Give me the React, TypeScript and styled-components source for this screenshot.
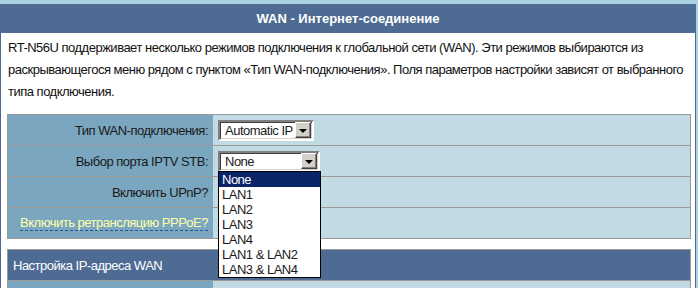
import styled, { createGlobalStyle } from 'styled-components'

const GlobalStyle = createGlobalStyle`
  html, body {
    margin: 0;
    padding: 0;
    background: #a8d2e2;
    overflow: hidden;
  }
  body {
    font-family: "Liberation Sans", Arial, sans-serif;
    font-size: 13px;
    letter-spacing: -0.5px;
    color: #000;
  }
`

const Panel = styled.div`
  margin-top: 4px;
  width: 694px;
  background: #fff;
  border-left: 1px solid #4c6a92;
  border-right: 1px solid #4c6a92;
  padding-bottom: 20px;
`

const PanelHeader = styled.div`
  height: 29px;
  margin: 0 -1px;
  background: #4d6b93;
  color: #fff;
  font-weight: bold;
  font-size: 13px;
  letter-spacing: 0;
  display: flex;
  align-items: center;
  justify-content: center;
`

const Intro = styled.p`
  margin: 4px 0 0;
  padding: 0 8px 0 7px;
  line-height: 22px;
  color: #111;
`

const Table = styled.div`
  margin: 11px 4px 0 6px;
  border: 1px solid #9a9a9a;
  & + & {
    margin-top: 10px;
  }
`

const Row = styled.div`
  display: grid;
  grid-template-columns: 205px 1fr;
  height: 30px;
  & + & {
    border-top: 1px solid #9a9a9a;
  }
`

const Label = styled.div`
  background: #7ba6c0;
  display: flex;
  align-items: center;
  justify-content: flex-end;
  padding-right: 5px;
  color: #1a1a1a;
  white-space: nowrap;
`

const HintLabel = styled.span<{ $hint?: boolean }>`
  color: ${({ $hint }) => ($hint ? '#ffffa8' : 'inherit')};
  border-bottom: ${({ $hint }) => ($hint ? '1px dashed #1f5a8c' : 'none')};
  line-height: 14px;
`

const Value = styled.div`
  background: #c1dae3;
  display: flex;
  align-items: center;
  padding-left: 5px;
  position: relative;
`

const SectionHeader = styled.div`
  height: 30px;
  background: #4d6b93;
  color: #fff;
  display: flex;
  align-items: center;
  padding-left: 5px;
  border-bottom: 1px solid #9a9a9a;
`

const Select = styled.div<{ $width: number }>`
  width: ${({ $width }) => $width}px;
  height: 21px;
  box-sizing: border-box;
  background: #fff;
  border: 2px solid;
  border-color: #808080 #fff #fff #808080;
  box-shadow: inset 1px 1px 0 #404040, inset -1px -1px 0 #d4d0c8;
  display: flex;
  align-items: center;
  padding: 0 1px 0 5px;
  color: #1a1a1a;
`

const SelectText = styled.span`
  flex: 1;
  white-space: nowrap;
  overflow: hidden;
`

const SelectButton = styled.span`
  width: 16px;
  height: 16px;
  flex-shrink: 0;
  box-sizing: border-box;
  background: #d4d0c8;
  border: 1px solid;
  border-color: #fff #404040 #404040 #fff;
  box-shadow: inset -1px -1px 0 #808080;
  display: flex;
  align-items: center;
  justify-content: center;

  &::after {
    content: '';
    border-left: 4px solid transparent;
    border-right: 4px solid transparent;
    border-top: 4px solid #000;
    margin-top: 1px;
  }
`

const DropList = styled.ul`
  position: absolute;
  left: 5px;
  top: 25px;
  width: 103px;
  margin: 0;
  padding: 0;
  list-style: none;
  background: #fff;
  border: 1px solid #000;
  box-sizing: border-box;
  z-index: 2;
`

const DropItem = styled.li<{ $active?: boolean }>`
  height: 15px;
  line-height: 15px;
  padding-left: 3px;
  background: ${({ $active }) => ($active ? '#0a246a' : '#fff')};
  color: ${({ $active }) => ($active ? '#fff' : '#1a1a1a')};
  white-space: nowrap;
`

const ports = ['None', 'LAN1', 'LAN2', 'LAN3', 'LAN4', 'LAN1 & LAN2', 'LAN3 & LAN4']

const App = () => {
  return (
    <>
      <GlobalStyle />
      <Panel>
        <PanelHeader>WAN - Интернет-соединение</PanelHeader>
        <Intro>
          RT-N56U поддерживает несколько режимов подключения к глобальной сети (WAN). Эти режимов
          выбираются из раскрывающегося меню рядом с пунктом «Тип WAN-подключения». Поля параметров
          настройки зависят от выбранного типа подключения.
        </Intro>

        <Table>
          <Row>
            <Label>Тип WAN-подключения:</Label>
            <Value>
              <Select $width={96}>
                <SelectText>Automatic IP</SelectText>
                <SelectButton />
              </Select>
            </Value>
          </Row>
          <Row>
            <Label>Выбор порта IPTV STB:</Label>
            <Value>
              <Select $width={102}>
                <SelectText>None</SelectText>
                <SelectButton />
              </Select>
              <DropList>
                {ports.map((port, index) => (
                  <DropItem key={port} $active={index === 0}>
                    {port}
                  </DropItem>
                ))}
              </DropList>
            </Value>
          </Row>
          <Row>
            <Label>Включить UPnP?</Label>
            <Value />
          </Row>
          <Row>
            <Label>
              <HintLabel $hint>Включить ретрансляцию PPPoE?</HintLabel>
            </Label>
            <Value />
          </Row>
        </Table>

        <Table>
          <SectionHeader>Настройка IP-адреса WAN</SectionHeader>
          <Row>
            <Label>Получить IP-адрес WAN</Label>
            <Value />
          </Row>
        </Table>
      </Panel>
    </>
  )
}

export default App
